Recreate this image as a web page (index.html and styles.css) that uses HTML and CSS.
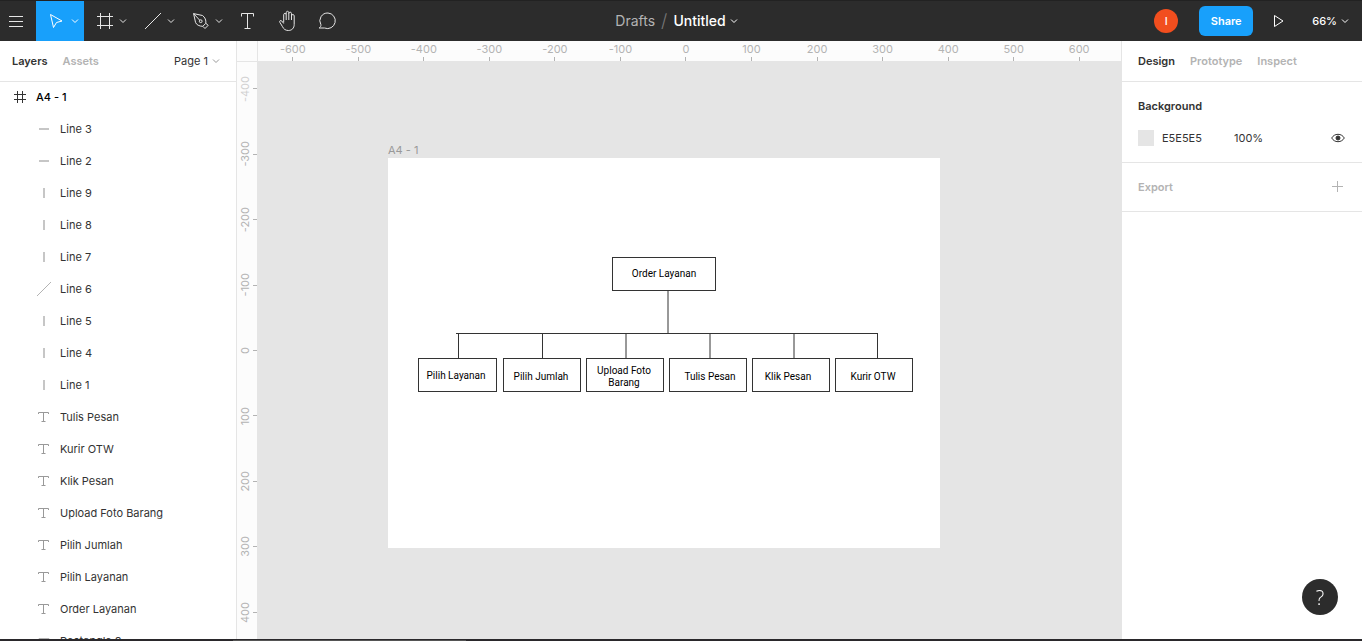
FILE: index.html
```
<!DOCTYPE html>
<html lang="en">
<head>
<meta charset="utf-8">
<title>Untitled</title>
<link rel="stylesheet" href="styles.css">
</head>
<body>
<svg class="sprite" aria-hidden="true">
  <symbol id="chevron" viewBox="0 0 8 8"><path d="M1 2.5 4 5.5 7 2.5"/></symbol>
  <symbol id="text" viewBox="0 0 12 12"><path d="M.5 3V1.500h10V3M5.500 1.500v9M3.500 10.500h4"/></symbol>
  <symbol id="dash" viewBox="0 0 12 12"><path d="M1 6h10" stroke-width="1.500"/></symbol>
  <symbol id="bar" viewBox="0 0 12 12"><path d="M6 1v10" stroke-width="1.500"/></symbol>
</svg>
<header class="toolbar">
  <div class="tools">
    <button class="tool tool-menu" aria-label="Menu"><svg width="16" height="16" viewBox="0 0 16 16"><path d="M1 3.500h14M1 8.500h14M1 13.500h14"/></svg></button>
    <button class="tool tool-wide active" aria-label="Move"><svg width="16" height="16" viewBox="0 0 16 16"><path d="M1.500 1.500 13 8 7.500 9.500 4.500 14.500Z"/></svg><svg class="chevron" width="8" height="8"><use href="#chevron"/></svg></button>
    <button class="tool tool-wide" aria-label="Frame"><svg width="16" height="16" viewBox="0 0 16 16"><path d="M3.500 0v16M12.500 0v16M0 3.500h16M0 12.500h16"/></svg><svg class="chevron" width="8" height="8"><use href="#chevron"/></svg></button>
    <button class="tool tool-wide" aria-label="Line"><svg width="16" height="16" viewBox="0 0 16 16"><path d="M0 16 16 0"/></svg><svg class="chevron" width="8" height="8"><use href="#chevron"/></svg></button>
    <button class="tool tool-wide" aria-label="Pen"><svg width="16" height="16" viewBox="0 0 16 16"><path d="M.6.600 9.500 2.500C12 4.300 13.300 7.300 12.800 10.300L9.800 13.300C6.300 13.300 3.300 11.800 2.500 9.300ZM.6.600 6.700 7.200M12.800 10.300l2.400 2-3.200 3.200-2.200-2.200"/><circle cx="7.700" cy="8.200" r="1.400"/></svg><svg class="chevron" width="8" height="8"><use href="#chevron"/></svg></button>
    <button class="tool" aria-label="Text"><svg width="16" height="18" viewBox="0 0 16 18"><path d="M1.500 4.500v-3h12v3M7.500 1.500v15M4.500 16.500h6"/></svg></button>
    <button class="tool" aria-label="Hand"><svg width="20" height="22" viewBox="0 0 20 22"><path d="M5.700 12.500V4.700c0-1.800 2.500-1.800 2.500 0V10M8.200 4.500V2.700c0-1.900 2.600-1.900 2.600 0V10M10.800 3.500c0-1.800 2.700-1.800 2.700 0V10M13.500 5.800c0-1.700 2.700-1.700 2.700 0v8.700c0 3.500-2.200 6-5.800 6-3 0-4.700-1.400-5.900-3.800L1.800 12.200c-.7-1.400 1-2.300 2-1.200l1.900 2.500"/></svg></button>
    <button class="tool" aria-label="Comment"><svg width="20" height="18" viewBox="0 0 20 18"><path d="M10 1a7.800 7.800 0 1 1-3.500 15H1.200c1.300-1 1.900-2 1.700-3.300A7.800 7.800 0 0 1 10 1Z"/></svg></button>
  </div>
  <div class="document"><a class="folder" href="#">Drafts</a><span class="slash">/</span><button class="name">Untitled<svg class="chevron" width="8" height="8"><use href="#chevron"/></svg></button></div>
  <div class="session">
    <span class="avatar">I</span>
    <button class="share">Share</button>
    <button class="present" aria-label="Present"><svg width="12" height="14" viewBox="0 0 12 14"><path d="M1.500 1.500v11L10 7Z"/></svg></button>
    <button class="zoom">66%<svg class="chevron" width="8" height="8"><use href="#chevron"/></svg></button>
  </div>
</header>
<main class="workspace">
  <aside class="layers">
    <nav class="tabs">
      <button class="tab selected">Layers</button><button class="tab">Assets</button>
      <button class="page">Page 1<svg class="chevron" width="8" height="8"><use href="#chevron"/></svg></button>
    </nav>
    <ul class="tree">
      <li class="row root"><svg width="12" height="12" viewBox="0 0 12 12"><path d="M3.500 0v12M8.500 0v12M0 3.500h12M0 8.500h12"/></svg>A4 - 1</li>
      <li class="row"><svg width="12" height="12"><use href="#dash"/></svg>Line 3</li>
      <li class="row"><svg width="12" height="12"><use href="#dash"/></svg>Line 2</li>
      <li class="row"><svg width="12" height="12"><use href="#bar"/></svg>Line 9</li>
      <li class="row"><svg width="12" height="12"><use href="#bar"/></svg>Line 8</li>
      <li class="row"><svg width="12" height="12"><use href="#bar"/></svg>Line 7</li>
      <li class="row"><svg width="12" height="12" viewBox="0 0 12 12"><path d="M-1 13 13-1"/></svg>Line 6</li>
      <li class="row"><svg width="12" height="12"><use href="#bar"/></svg>Line 5</li>
      <li class="row"><svg width="12" height="12"><use href="#bar"/></svg>Line 4</li>
      <li class="row"><svg width="12" height="12"><use href="#bar"/></svg>Line 1</li>
      <li class="row type"><svg width="12" height="12"><use href="#text"/></svg>Tulis Pesan</li>
      <li class="row type"><svg width="12" height="12"><use href="#text"/></svg>Kurir OTW</li>
      <li class="row type"><svg width="12" height="12"><use href="#text"/></svg>Klik Pesan</li>
      <li class="row type"><svg width="12" height="12"><use href="#text"/></svg>Upload Foto Barang</li>
      <li class="row type"><svg width="12" height="12"><use href="#text"/></svg>Pilih Jumlah</li>
      <li class="row type"><svg width="12" height="12"><use href="#text"/></svg>Pilih Layanan</li>
      <li class="row type"><svg width="12" height="12"><use href="#text"/></svg>Order Layanan</li>
      <li class="row"><svg width="12" height="12" viewBox="0 0 12 12"><path d="M1 3.500h10v5H1Z"/></svg>Rectangle 8</li>
    </ul>
  </aside>
  <section class="stage">
    <div class="corner"></div>
    <div class="ruler-x"><span>-600</span><span>-500</span><span>-400</span><span>-300</span><span>-200</span><span>-100</span><span>0</span><span>100</span><span>200</span><span>300</span><span>400</span><span>500</span><span>600</span></div>
    <div class="ruler-y"><div class="marks"><span class="faint"><b>-400</b></span><span><b>-300</b></span><span><b>-200</b></span><span><b>-100</b></span><span><b>0</b></span><span><b>100</b></span><span><b>200</b></span><span><b>300</b></span><span><b>400</b></span></div></div>
    <div class="canvas">
      <div class="artboard">
        <span class="caption">A4 - 1</span>
        <svg class="diagram" width="552" height="390" viewBox="0 0 552 390">
          <path d="M280 133v42M238 175v25M322 175v25M406 175v25"/>
          <path d="M68 175.500H490M70.500 175v25M154.500 175v25M489.500 175v25"/>
          <rect x="224.500" y="99.500" width="103" height="33"/>
          <rect x="30.500" y="200.500" width="78" height="33"/>
          <rect x="115.500" y="200.500" width="77" height="33"/>
          <rect x="198.500" y="200.500" width="77" height="33"/>
          <rect x="281.500" y="200.500" width="77" height="33"/>
          <rect x="364.500" y="200.500" width="77" height="33"/>
          <rect x="447.500" y="200.500" width="77" height="33"/>
          <text x="276" y="119">Order Layanan</text>
          <text x="68" y="221">Pilih Layanan</text>
          <text x="153" y="222">Pilih Jumlah</text>
          <text x="236" y="216">Upload Foto</text>
          <text x="236" y="228">Barang</text>
          <text x="322" y="222">Tulis Pesan</text>
          <text x="400" y="222">Klik Pesan</text>
          <text x="485" y="222">Kurir OTW</text>
        </svg>
      </div>
    </div>
  </section>
  <aside class="inspector">
    <nav class="tabs"><button class="tab selected">Design</button><button class="tab">Prototype</button><button class="tab">Inspect</button></nav>
    <section class="background">
      <h2>Background</h2>
      <div class="fill">
        <button class="swatch" aria-label="Background color"></button>
        <input class="hex" aria-label="Hex" value="E5E5E5">
        <input class="opacity" aria-label="Opacity" value="100%">
        <button class="icon" aria-label="Toggle visibility"><svg width="14" height="10" viewBox="0 0 14 10"><path d="M.7 5C2 2.700 4.300 1.300 7 1.300S12 2.700 13.300 5C12 7.300 9.700 8.700 7 8.700S2 7.300.7 5Z"/><circle cx="7" cy="5" r="2"/></svg></button>
      </div>
    </section>
    <section class="export"><h2>Export</h2><button class="icon plus" aria-label="Add export"><svg width="12" height="12" viewBox="0 0 12 12"><path d="M5.500 0v11M0 5.500h11"/></svg></button></section>
    <button class="help" aria-label="Help">?</button>
  </aside>
</main>
<footer class="taskbar"><span></span></footer>
</body>
</html>
```
FILE: styles.css
```
* { box-sizing: border-box; }
body {
  margin: 0;
  height: 100vh;
  display: flex;
  flex-direction: column;
  overflow: hidden;
  font: 11px/16px Inter, sans-serif;
  color: #333;
  background: #fff;
}
button, input {
  font: inherit;
  color: inherit;
  background: none;
  border: 0;
  padding: 0;
  margin: 0;
}
svg { fill: none; stroke: currentColor; flex: none; }
.sprite { position: absolute; width: 0; height: 0; }
h2 { margin: 0; font-size: 11px; line-height: 16px; font-weight: 600; }

.toolbar {
  flex: none;
  height: 41px;
  display: grid;
  grid-template-columns: 1fr auto 1fr;
  background: #2c2c2c;
  border-top: 1px solid #222;
  color: #fff;
}
.tools, .document, .session, .name, .zoom { display: flex; align-items: center; }
.tool {
  width: 40px;
  height: 40px;
  display: flex;
  align-items: center;
  justify-content: center;
  gap: 6px;
  color: #e6e6e6;
}
.tool-menu { width: 36px; padding-right: 4px; }
.tool-wide { width: 48px; padding-left: 8px; }
.active { background: #18a0fb; color: #fff; }
.document { font-size: 14px; padding-right: 9px; }
.folder { color: #b3b3b3; text-decoration: none; }
.slash { color: #777; font-size: 18px; font-weight: 300; padding: 0 6px; }
.name { gap: 4px; font-weight: 500; }
.session { justify-content: flex-end; }
.avatar {
  width: 24px;
  height: 24px;
  margin-right: 21px;
  border-radius: 50%;
  background: #f24e1e;
  line-height: 24px;
  text-align: center;
  font-weight: 500;
}
.share {
  width: 54px;
  height: 30px;
  margin-right: 20px;
  border-radius: 6px;
  background: #18a0fb;
  font-weight: 600;
}
.present { display: flex; margin-right: 28px; }
.zoom { gap: 4px; margin-right: 14px; font-weight: 500; }
.session .zoom { padding: 0; margin-right: 13px; }
.session .present { margin-right: 27px; }

.workspace { flex: 1; min-height: 0; display: flex; }
.layers {
  width: 237px;
  flex: none;
  overflow: hidden;
  border-right: 1px solid #e5e5e5;
}
.tabs {
  height: 41px;
  display: flex;
  align-items: center;
  gap: 15px;
  padding: 0 16px;
  border-bottom: 1px solid #e5e5e5;
}
.layers .tabs { padding: 0 16px 0 12px; }
.tab { font-weight: 600; color: #b3b3b3; }
.tab.selected { color: #333; }
.page { margin-left: auto; display: flex; align-items: center; gap: 4px; }
.page .chevron { color: #999; }
.tree { list-style: none; margin: -1px 0 0; padding: 0; }
.row {
  height: 32px;
  display: flex;
  align-items: center;
  gap: 10px;
  padding-left: 38px;
}
.row svg { color: #b3b3b3; overflow: visible; }
.row.root { padding-left: 14px; font-weight: 500; color: #000; }
.row.root svg { color: #333; }
.row.type svg { color: #999; }

.stage {
  flex: 1;
  min-width: 0;
  display: grid;
  grid-template: 20px 1fr / 20px 1fr;
}
.corner {
  z-index: 1;
  width: 21px;
  height: 21px;
  background: #fcfcfc;
  border-right: 1px solid #e5e5e5;
  border-bottom: 1px solid #e5e5e5;
}
.ruler-x {
  display: grid;
  grid-template-columns: repeat(13, 1fr);
  padding: 0 9px 0 3px;
  background: #fcfcfc;
  color: #b3b3b3;
  overflow: hidden;
}
.ruler-x span { display: flex; flex-direction: column; align-items: center; line-height: 16px; }
.ruler-x span::after { content: ""; width: 1px; height: 4px; background: #b3b3b3; }
.ruler-y { background: #fcfcfc; color: #b3b3b3; overflow: hidden; min-height: 0; }
.marks {
  height: calc(100% + 11px);
  margin-top: -5px;
  display: grid;
  grid-template-rows: repeat(9, 1fr);
}
.marks span { display: flex; align-items: center; justify-content: space-between; }
.marks span::after { content: ""; width: 4px; height: 1px; background: #b3b3b3; }
.marks b { font-weight: 400; writing-mode: vertical-rl; rotate: 180deg; }
.marks .faint b { opacity: .6; }
.canvas { position: relative; background: #e5e5e5; overflow: hidden; }
.artboard { position: absolute; left: 131px; top: 97px; background: #fff; }
.caption { position: absolute; left: 0; top: -16px; white-space: nowrap; color: #999; }
.diagram { display: block; stroke: #333; }
.diagram text {
  font: 10px Roboto, sans-serif;
  text-anchor: middle;
  fill: #000;
  stroke: none;
}

.inspector { width: 241px; flex: none; border-left: 1px solid #e5e5e5; }
.background { padding: 16px; border-bottom: 1px solid #e5e5e5; }
.fill { display: flex; align-items: center; margin-top: 16px; }
.swatch { width: 16px; height: 16px; margin-right: 8px; background: #e5e5e5; }
.hex { width: 72px; }
.opacity { width: 56px; }
.icon { display: flex; justify-content: center; width: 16px; margin-left: auto; }
.icon circle { fill: currentColor; }
.plus, .export { color: #b3b3b3; }
.export {
  height: 49px;
  display: flex;
  align-items: center;
  padding: 0 16px;
  border-bottom: 1px solid #e5e5e5;
}
.help {
  position: fixed;
  right: 24px;
  bottom: 26px;
  width: 36px;
  height: 36px;
  border-radius: 50%;
  background: #2c2c2c;
  color: #fff;
  font: 300 20px "Open Sans", sans-serif;
}
.taskbar { flex: none; height: 2px; padding: 1px 0 0 233px; background: #2a282b; }
.taskbar span { display: block; width: 233px; height: 1px; background: #555; }
```
